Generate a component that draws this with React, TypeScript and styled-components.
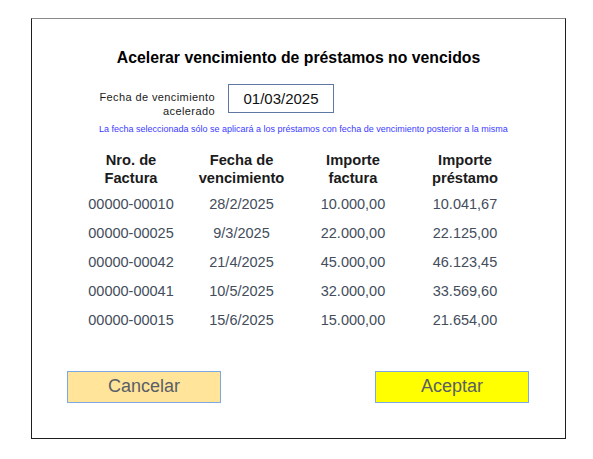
import styled, { createGlobalStyle } from "styled-components";

const GlobalStyle = createGlobalStyle`
  body {
    margin: 0;
    background: #ffffff;
    font-family: "Liberation Sans", Arial, sans-serif;
  }
`;

const Page = styled.div`
  padding: 18px 0 0 31px;
`;

const Frame = styled.div`
  box-sizing: border-box;
  width: 535px;
  height: 421px;
  border: 1px solid #1e1e1e;
  border-top-color: #8a8a8a;
  display: flex;
  flex-direction: column;
`;

const Title = styled.h1`
  margin: 29px 0 0;
  font-size: 15.8px;
  line-height: 19px;
  font-weight: 700;
  color: #000;
  text-align: center;
`;

const DateRow = styled.div`
  display: flex;
  align-items: flex-start;
  gap: 13px;
  margin: 17px 0 0 63px;
`;

const DateLabel = styled.div`
  width: 120px;
  margin-top: 6px;
  font-size: 11px;
  line-height: 14px;
  letter-spacing: 0.4px;
  color: #1a1a1a;
  text-align: right;
`;

const DateInput = styled.div`
  box-sizing: border-box;
  width: 106px;
  height: 29px;
  border: 1px solid #5f77a3;
  display: flex;
  align-items: center;
  justify-content: center;
  font-size: 15px;
  color: #111;
`;

const Notice = styled.p`
  margin: 5px 0 0 67px;
  font-size: 9px;
  line-height: 12px;
  color: #3b3bff;
  white-space: nowrap;
`;

const Table = styled.div`
  display: grid;
  grid-template-columns: 110px 111px 112px 112px;
  margin: 16px 0 0 44px;
`;

const HeadCell = styled.div`
  font-size: 14.7px;
  line-height: 18px;
  font-weight: 700;
  color: #1b1b1b;
  text-align: center;
  margin-bottom: 2.5px;
`;

const Cell = styled.div`
  font-size: 14.5px;
  line-height: 29px;
  color: #434d5c;
  text-align: center;
`;

const Buttons = styled.div`
  display: flex;
  justify-content: space-between;
  margin: 36px 36px 0 35px;
`;

const Button = styled.button<{ $bg: string }>`
  box-sizing: border-box;
  width: 154px;
  height: 32px;
  padding: 0;
  border: 1px solid #7ea8e4;
  background: ${(p) => p.$bg};
  font-family: "Liberation Sans", Arial, sans-serif;
  font-size: 18px;
  color: #5a5e66;
  cursor: pointer;
`;

const headers = [
  ["Nro. de", "Factura"],
  ["Fecha de", "vencimiento"],
  ["Importe", "factura"],
  ["Importe", "préstamo"],
];

const rows = [
  ["00000-00010", "28/2/2025", "10.000,00", "10.041,67"],
  ["00000-00025", "9/3/2025", "22.000,00", "22.125,00"],
  ["00000-00042", "21/4/2025", "45.000,00", "46.123,45"],
  ["00000-00041", "10/5/2025", "32.000,00", "33.569,60"],
  ["00000-00015", "15/6/2025", "15.000,00", "21.654,00"],
];

const App = () => {
  return (
    <>
      <GlobalStyle />
      <Page>
        <Frame>
          <Title>Acelerar vencimiento de préstamos no vencidos</Title>
          <DateRow>
            <DateLabel>
              Fecha de vencimiento
              <br />
              acelerado
            </DateLabel>
            <DateInput>01/03/2025</DateInput>
          </DateRow>
          <Notice>
            La fecha seleccionada sólo se aplicará a los préstamos con fecha de
            vencimiento posterior a la misma
          </Notice>
          <Table>
            {headers.map(([a, b]) => (
              <HeadCell key={a + b}>
                {a}
                <br />
                {b}
              </HeadCell>
            ))}
            {rows.map((r) =>
              r.map((v, i) => <Cell key={r[0] + i}>{v}</Cell>)
            )}
          </Table>
          <Buttons>
            <Button $bg="#ffe49a">Cancelar</Button>
            <Button $bg="#ffff00">Aceptar</Button>
          </Buttons>
        </Frame>
      </Page>
    </>
  );
};

export default App;
